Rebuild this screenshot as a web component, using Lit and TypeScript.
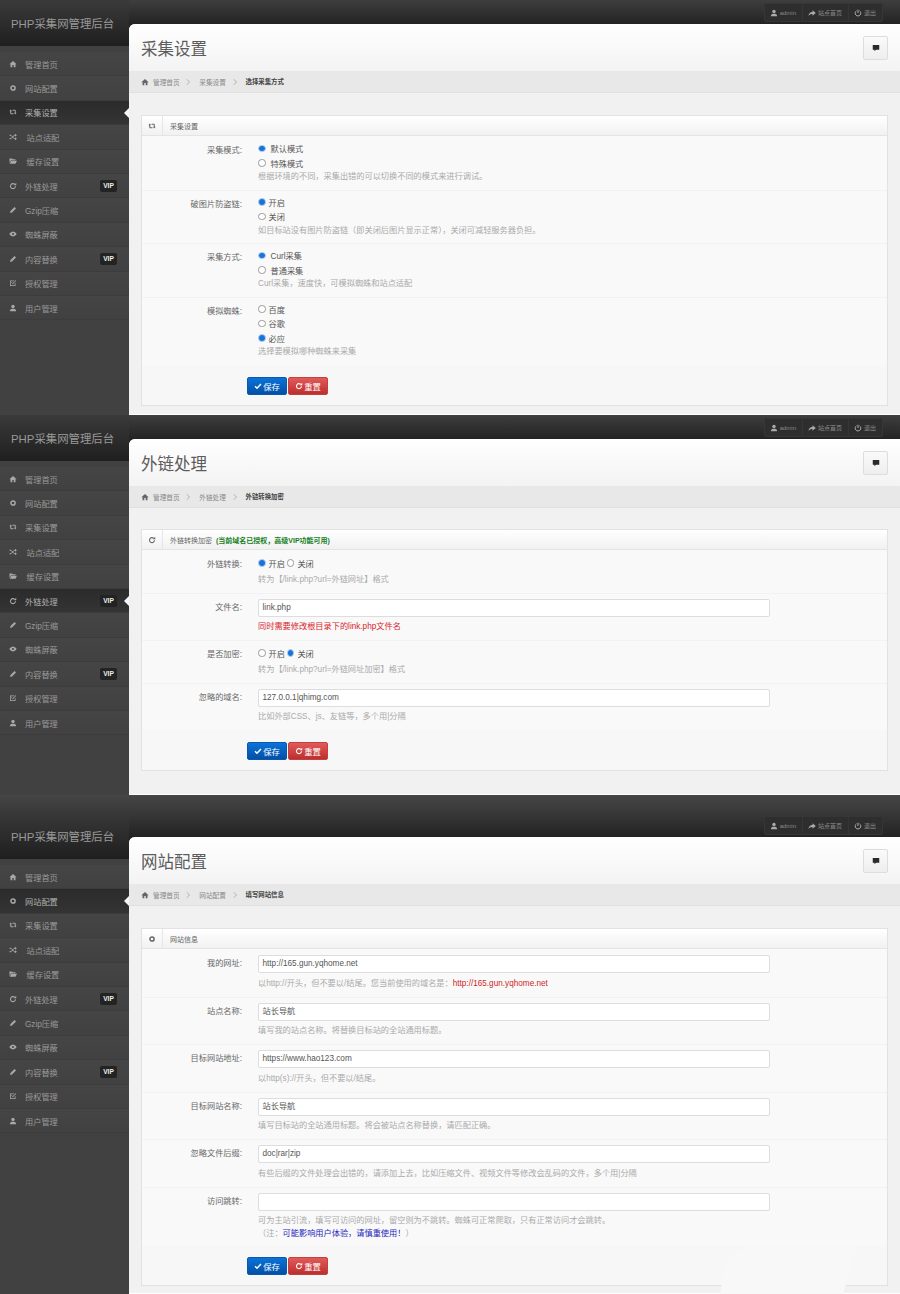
import { LitElement, html, css, svg, nothing } from "lit";
import { customElement } from "lit/decorators.js";

const ICONS: Record<string, unknown> = {
  home: svg`<path d="M8 2 0.8 8.4H3V14.5H6.6V10.2H9.4V14.5H13V8.4H15.2Z"/>`,
  cog: svg`<circle cx="8" cy="8" r="4.2" fill="none" stroke="currentColor" stroke-width="3"/>`,
  retweet: svg`<path d="M3.5 6v5.5H9M12.5 10V4.5H7" fill="none" stroke="currentColor" stroke-width="2"/><path d="M.8 6.5h5.4L3.5 3.2ZM9.8 9.5h5.4l-2.7 3.3Z"/>`,
  random: svg`<path d="M1 4.5h3l6.5 7H13M1 11.5h3l6.5-7H13" fill="none" stroke="currentColor" stroke-width="2"/><path d="M12 1.5 15.8 4.5 12 7.5ZM12 8.5l3.8 3-3.8 3Z"/>`,
  folder: svg`<path d="M1 3h5l1.5 1.5H13V6.5H4L1 12.5ZM4.6 7.5H16L13 13.5H1.6Z"/>`,
  refresh: svg`<path d="M13 8.5A5 5 0 1 1 11.4 4.6" fill="none" stroke="currentColor" stroke-width="2.2"/><path d="M9.5 6.5H14.5V1.5Z"/>`,
  pencil: svg`<path d="M2 14 3 10 11 2l3 3-8 8Z"/>`,
  eye: svg`<path fill-rule="evenodd" d="M.8 8S3.6 3 8 3s7.2 5 7.2 5-2.8 5-7.2 5S.8 8 .8 8ZM8 6a2 2 0 1 0 0 4 2 2 0 0 0 0-4Z"/>`,
  check: svg`<path d="M2 3h9l-1.5 1.5h-6v8h8V9L13 7.5V14H2Z"/><path d="M5 6.8 7.6 9.4 14 3" fill="none" stroke="currentColor" stroke-width="2"/>`,
  user: svg`<circle cx="8" cy="5" r="3.4"/><path d="M1.8 14.5c0-3.8 2.6-5 6.2-5s6.2 1.2 6.2 5Z"/>`,
  share: svg`<path d="M9 2.5 15.5 8 9 13.5V10.2C5.4 10.2 3 11.2 1 14 1.2 9 4 6 9 5.8Z"/>`,
  power: svg`<path d="M11 3.6a5.6 5.6 0 1 1-6 0M8 1.5V8" fill="none" stroke="currentColor" stroke-width="2"/>`,
  comment: svg`<path d="M1.5 2h13v9.5H8L5 14.5v-3H1.5Z"/>`,
  tick: svg`<path d="M2 8.5 6 12.5 14 4" fill="none" stroke="currentColor" stroke-width="3"/>`,
  chevron: svg`<path d="M5.5 2.5 11 8l-5.5 5.5" fill="none" stroke="currentColor" stroke-width="1.4"/>`,
};

const icon = (name: string) =>
  html`<svg class="ic" viewBox="0 0 16 16" fill="currentColor" aria-hidden="true">${ICONS[name]}</svg>`;

const MENU = [
  { t: "管理首页", i: "home" },
  { t: "网站配置", i: "cog" },
  { t: "采集设置", i: "retweet" },
  { t: "站点适配", i: "random", wide: true },
  { t: "缓存设置", i: "folder", wide: true },
  { t: "外链处理", i: "refresh", vip: true },
  { t: "Gzip压缩", i: "pencil" },
  { t: "蜘蛛屏蔽", i: "eye" },
  { t: "内容替换", i: "pencil", vip: true },
  { t: "授权管理", i: "check" },
  { t: "用户管理", i: "user" },
];

type Opt = { t: string; on?: boolean; sp?: boolean };
type Row = { label: string; opts?: Opt[]; inline?: boolean; value?: string; hint: unknown; hintCls?: string };
type Screen = {
  cls: string; active: number; title: string; crumb: string; crumbLast: string;
  wicon: string; wtitle: unknown; rows: Row[];
};

const SCREENS: Screen[] = [
  {
    cls: "s1", active: 2, title: "采集设置", crumb: "采集设置", crumbLast: "选择采集方式",
    wicon: "retweet", wtitle: "采集设置",
    rows: [
      { label: "采集模式:", opts: [{ t: "默认模式", on: true, sp: true }, { t: "特殊模式", sp: true }], hint: "根据环境的不同，采集出错的可以切换不同的模式来进行调试。" },
      { label: "破图片防盗链:", opts: [{ t: "开启", on: true }, { t: "关闭" }], hint: "如目标站没有图片防盗链（即关闭后图片显示正常），关闭可减轻服务器负担。" },
      { label: "采集方式:", opts: [{ t: "Curl采集", on: true, sp: true }, { t: "普通采集", sp: true }], hint: "Curl采集，速度快，可模拟蜘蛛和站点适配" },
      { label: "模拟蜘蛛:", opts: [{ t: "百度" }, { t: "谷歌" }, { t: "必应", on: true }], hint: "选择要模拟哪种蜘蛛来采集" },
    ],
  },
  {
    cls: "s2", active: 5, title: "外链处理", crumb: "外链处理", crumbLast: "外链转换加密",
    wicon: "refresh",
    wtitle: html`外链转换加密 <b class="ok">(当前域名已授权，高级VIP功能可用)</b>`,
    rows: [
      { label: "外链转换:", inline: true, opts: [{ t: "开启", on: true }, { t: "关闭" }], hint: "转为【/link.php?url=外链网址】格式" },
      { label: "文件名:", value: "link.php", hint: "同时需要修改根目录下的link.php文件名", hintCls: "err" },
      { label: "是否加密:", inline: true, opts: [{ t: "开启" }, { t: "关闭", on: true }], hint: "转为【/link.php?url=外链网址加密】格式" },
      { label: "忽略的域名:", value: "127.0.0.1|qhimg.com", hint: "比如外部CSS、js、友链等，多个用|分隔" },
    ],
  },
  {
    cls: "s3", active: 1, title: "网站配置", crumb: "网站配置", crumbLast: "填写网站信息",
    wicon: "cog", wtitle: "网站信息",
    rows: [
      { label: "我的网址:", value: "http://165.gun.yqhome.net", hint: html`以http://开头，但不要以/结尾。您当前使用的域名是：<span class="red">http://165.gun.yqhome.net</span>` },
      { label: "站点名称:", value: "站长导航", hint: "填写我的站点名称。将替换目标站的全站通用标题。" },
      { label: "目标网站地址:", value: "https://www.hao123.com", hint: "以http(s)://开头，但不要以/结尾。" },
      { label: "目标网站名称:", value: "站长导航", hint: "填写目标站的全站通用标题。将会被站点名称替换，请匹配正确。" },
      { label: "忽略文件后缀:", value: "doc|rar|zip", hint: "有些后缀的文件处理会出错的，请添加上去，比如压缩文件、视频文件等修改会乱码的文件，多个用|分隔" },
      { label: "访问跳转:", value: "", hintCls: "two", hint: html`可为主站引流，填写可访问的网址，留空则为不跳转。蜘蛛可正常爬取，只有正常访问才会跳转。<br />（注：<span class="blue">可能影响用户体验，请慎重使用！</span>）` },
    ],
  },
];

@customElement("app-root")
export class AppRoot extends LitElement {
  static styles = css`
    :host {
      display: block;
      font-family: "Liberation Sans", "Noto Sans CJK SC", sans-serif;
      font-size: 8.2px;
      color: #666;
      overflow: hidden;
    }
    * { box-sizing: border-box; }
    .ic { display: block; flex: none; width: 8px; height: 8px; }

    .screen {
      position: relative;
      display: grid;
      grid-template-columns: 129px 1fr;
      grid-template-rows: 24px auto;
      background: linear-gradient(#3e3e3e 0, #232323 24px, #232323 100%);
    }
    .screen.s3 {
      padding-top: 18px;
      background: linear-gradient(#454545 0, #383838 18px, #232323 42px, #232323 100%);
    }
    .side { grid-row: 1 / span 2; background: #414141; display: flex; flex-direction: column; }
    .s3 .side { margin-top: -18px; }
    .logo {
      height: 46px;
      display: flex;
      align-items: center;
      padding-left: 11px;
      font-size: 11.4px;
      color: #999;
      background: linear-gradient(#3a3a3a, #1f1f1f);
    }
    .s3 .logo {
      height: 64px;
      padding-top: 18px;
      background: linear-gradient(#454545, #383838 18px, #1f1f1f);
    }
    .menu { padding-top: 6px; }
    .item {
      position: relative;
      height: 24.4px;
      display: flex;
      align-items: center;
      padding-left: 9px;
      color: #9a9a9a;
      border-bottom: 1px solid #3c3c3c;
      background: linear-gradient(#454545, #414141);
    }
    .item .ic { margin-right: 8px; color: #a8a8a8; }
    .item.wide .ic { margin-right: 9.5px; }
    .item.on { background: linear-gradient(#2b2b2b, #343434); color: #b0b0b0; }
    .item.on::after {
      content: "";
      position: absolute;
      right: 0;
      top: 7px;
      border: 5px solid transparent;
      border-right-color: #f6f6f6;
      border-left-width: 0;
    }
    .vip {
      position: absolute;
      left: 100px;
      top: 6px;
      width: 17px;
      height: 12px;
      line-height: 12px;
      text-align: center;
      border-radius: 2px;
      background: #232323;
      color: #eee;
      font-size: 6.6px;
      font-weight: bold;
    }

    .top { display: flex; justify-content: flex-end; padding: 3px 17px 2px 0; }
    .top-btn {
      display: flex;
      align-items: center;
      gap: 2px;
      padding: 0 6px 0 5px;
      height: 19px;
      font-size: 6px;
      color: #8a8a8a;
      background: #2e2e2e;
      border: 1px solid #363636;
      border-left-width: 0;
    }
    .top-btn:first-child { border-left-width: 1px; border-radius: 2px 0 0 2px; }
    .top-btn:last-child { border-radius: 0 2px 2px 0; }
    .top-btn .ic { color: #aaa; }

    .card {
      grid-column: 2;
      background: #f1f1f1;
      border-radius: 6px 0 0 0;
      overflow: hidden;
      border-bottom: 1px solid #fff;
    }
    .head {
      height: 47px;
      display: flex;
      align-items: center;
      justify-content: space-between;
      padding: 0 12px;
      background: linear-gradient(#fff, #f3f3f3);
    }
    .head h1 { margin: 0; font-size: 16.5px; font-weight: normal; color: #5c5c5c; }
    .chat {
      width: 25px;
      height: 24px;
      display: flex;
      align-items: center;
      justify-content: center;
      background: linear-gradient(#fafafa, #eee);
      border: 1px solid #ddd;
      border-radius: 2px;
      color: #2a2a2a;
    }
    .crumbs {
      height: 22px;
      display: flex;
      align-items: center;
      padding-left: 12px;
      font-size: 6.7px;
      color: #888;
      background: #e8e8e8;
      border-bottom: 1px solid #e0e0e0;
    }
    .crumbs .home { margin-right: 4px; color: #666; }
    .crumbs .sep { width: 7px; height: 7px; margin: 0 8px 0 4.5px; color: #999; }
    .crumbs b { color: #444; font-size: 6.4px; }

    .body { padding: 22px 12px 0; }
    .s1 .body { padding-bottom: 8.5px; }
    .s2 .body { padding-top: 21px; padding-bottom: 23px; }
    .s3 .body { padding-bottom: 7px; }
    .widget { background: #f9f9f9; border: 1px solid #e2e2e2; }
    .w-head {
      height: 20px;
      display: flex;
      align-items: center;
      font-size: 7px;
      color: #666;
      background: linear-gradient(#fff, #f1f1f1);
      border-bottom: 1px solid #e4e4e4;
    }
    .w-icon {
      width: 21px;
      height: 100%;
      display: flex;
      align-items: center;
      justify-content: center;
      border-right: 1px solid #e6e6e6;
      margin-right: 7px;
      color: #666;
    }
    .ok { color: #13801c; margin-left: 2px; }
    .row {
      display: grid;
      grid-template-columns: 100px 512px;
      column-gap: 16px;
      padding: 5px 0;
      box-shadow: 0 1px 0 #f2f2f2;
    }
    .row.tight { padding: 5.5px 0; }
    .row.field { padding: 6px 0; }
    .label { text-align: right; color: #666; line-height: 14.5px; padding-top: 3px; }
    .row.tight .label { padding-top: 2px; }
    .row.field .label { line-height: 18px; padding-top: 0; }
    .opt { display: flex; align-items: center; height: 14.5px; color: #555; gap: 3px; }
    .opt.sp { gap: 5px; }
    .opts.inline { display: flex; gap: 2px; }
    .dot { width: 7.5px; height: 7.5px; border-radius: 50%; background: #fff; border: 1px solid #999; flex: none; }
    .dot.on { background: #1a73d9; border: 1.2px solid #bcd6f2; }
    .hint { color: #aaa; line-height: 14.5px; }
    .row.tight .hint { margin-top: 2.5px; }
    .row.field .hint { margin-top: 3.5px; line-height: 14px; }
    .row.field .hint.two { line-height: 13px; margin-bottom: -1px; }
    .hint.err { color: #d8232a; }
    .red { color: #cf1f25; }
    .blue { color: #1d1dbb; }
    .input {
      height: 18px;
      line-height: 16px;
      padding: 0 3.5px;
      background: #fff;
      border: 1px solid #ddd;
      border-radius: 2px;
      font-size: 8.2px;
      color: #555;
    }
    .foot {
      height: 40px;
      display: flex;
      gap: 1px;
      padding: 12px 0 0 105px;
      background: #f7f7f7;
      position: relative;
    }
    .btn {
      width: 40px;
      height: 18px;
      display: flex;
      align-items: center;
      justify-content: center;
      gap: 1px;
      color: #fff;
      font-size: 8.4px;
      border-radius: 2px;
    }
    .btn.save { background: linear-gradient(#0b73d9, #0350a6); border: 1px solid #0a58ad; }
    .btn.reset { background: linear-gradient(#e25a5a, #bd2f2f); border: 1px solid #c24141; }
    .smear { position: absolute; left: 720px; bottom: 0; width: 140px; height: 50px; }
  `;

  private renderMenu(active: number) {
    return MENU.map(
      (m, i) => html`<div class="item ${i === active ? "on" : ""} ${m.wide ? "wide" : ""}">
        ${icon(m.i)}<span>${m.t}</span>${m.vip ? html`<span class="vip">VIP</span>` : nothing}
      </div>`
    );
  }

  private renderRow(r: Row) {
    const kind = r.opts ? (r.inline ? "tight" : "") : "field";
    return html`<div class="row ${kind}">
      <div class="label">${r.label}</div>
      <div>
        ${r.opts
          ? html`<div class="opts ${r.inline ? "inline" : ""}">
              ${r.opts.map(
                (o) => html`<div class="opt ${o.sp ? "sp" : ""}"><span class="dot ${o.on ? "on" : ""}"></span>${o.t}</div>`
              )}
            </div>`
          : html`<div class="input">${r.value}</div>`}
        <div class="hint ${r.hintCls ?? ""}">${r.hint}</div>
      </div>
    </div>`;
  }

  private renderScreen(s: Screen) {
    return html`<section class="screen ${s.cls}">
      <aside class="side">
        <div class="logo">PHP采集网管理后台</div>
        <nav class="menu">${this.renderMenu(s.active)}</nav>
      </aside>
      <div class="top">
        <div class="top-btn">${icon("user")}admin</div>
        <div class="top-btn">${icon("share")}站点首页</div>
        <div class="top-btn">${icon("power")}退出</div>
      </div>
      <main class="card">
        <div class="head"><h1>${s.title}</h1><div class="chat">${icon("comment")}</div></div>
        <div class="crumbs">
          <span class="home">${icon("home")}</span>管理首页
          <span class="sep">${icon("chevron")}</span>${s.crumb}
          <span class="sep">${icon("chevron")}</span><b>${s.crumbLast}</b>
        </div>
        <div class="body">
          <div class="widget">
            <div class="w-head"><span class="w-icon">${icon(s.wicon)}</span><span>${s.wtitle}</span></div>
            ${s.rows.map((r) => this.renderRow(r))}
            <div class="foot">
              <div class="btn save">${icon("tick")}保存</div>
              <div class="btn reset">${icon("refresh")}重置</div>
            </div>
          </div>
        </div>
      </main>
      ${s.cls === "s3"
        ? html`<svg class="smear" viewBox="0 0 140 50" aria-hidden="true"><path d="M0 50 5 18 30 0H137L123 50Z" fill="#f8f8f8" /></svg>`
        : nothing}
    </section>`;
  }

  render() {
    return html`${SCREENS.map((s) => this.renderScreen(s))}`;
  }
}
